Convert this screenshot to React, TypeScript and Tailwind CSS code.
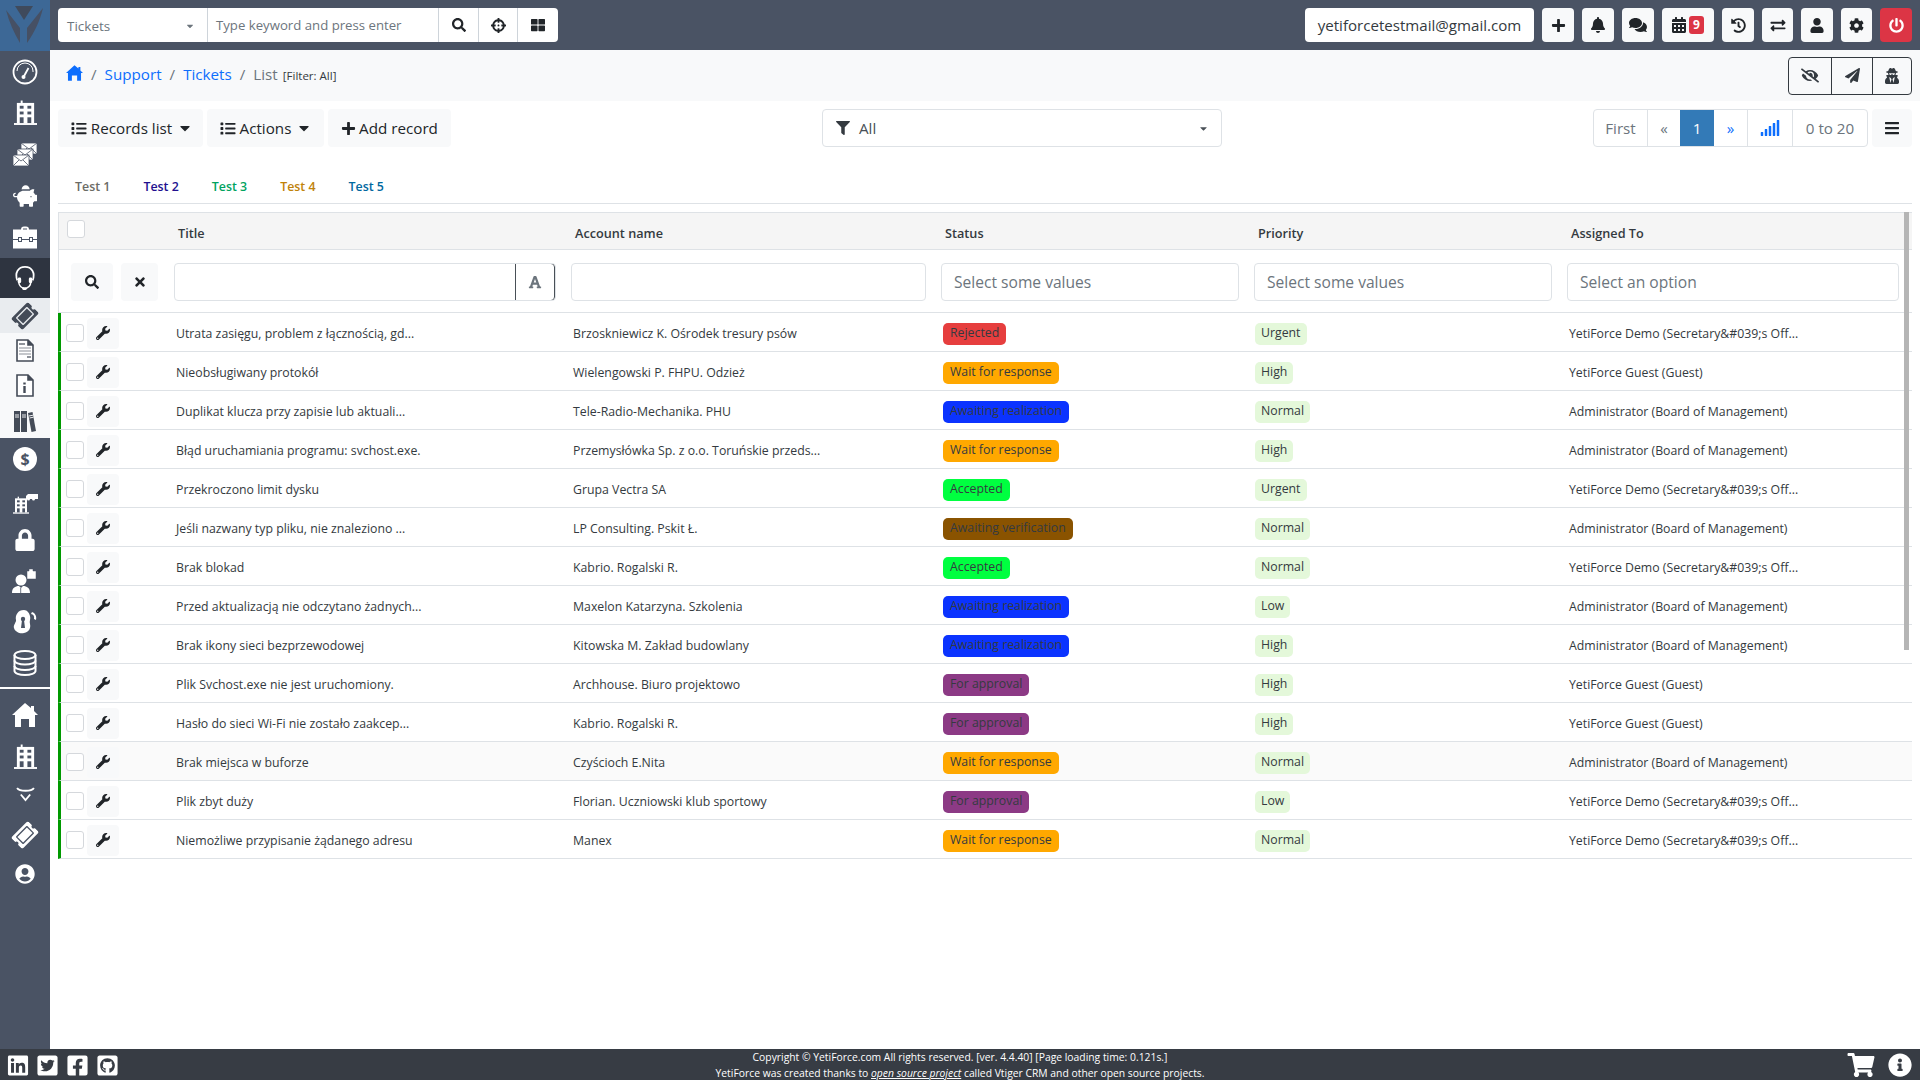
import type { ReactNode } from "react";
import {
  FaBars, FaBell, FaCalendarAlt, FaCaretDown, FaCog, FaComments, FaCrosshairs,
  FaExchangeAlt, FaEyeSlash, FaFacebookSquare, FaFilter, FaFont, FaGithubSquare,
  FaHistory, FaInfoCircle, FaLinkedin, FaList, FaLock, FaPaperPlane, FaPiggyBank, FaPlus, FaPowerOff,
  FaSearch, FaShoppingCart, FaSignal, FaTicketAlt, FaTimes, FaTwitterSquare, FaUser, FaUserCircle, FaUserSecret,
  FaWrench, FaThLarge,
} from "react-icons/fa";

const STATUS: Record<string, string> = {
  "Rejected": "bg-[#e63e3e]",
  "Wait for response": "bg-[#ffa800]",
  "Awaiting realization": "bg-[#0b33ff]",
  "Accepted": "bg-[#00ff40]",
  "Awaiting verification": "bg-[#8a5300]",
  "For approval": "bg-[#8c3a85]",
};

const DEMO = "YetiForce Demo (Secretary&#039;s Off...";
const GUEST = "YetiForce Guest (Guest)";
const ADMIN = "Administrator (Board of Management)";

const rows = [
  ["Utrata zasięgu, problem z łącznością, gd...", "Brzoskniewicz K. Ośrodek tresury psów", "Rejected", "Urgent", DEMO],
  ["Nieobsługiwany protokół", "Wielengowski P. FHPU. Odzież", "Wait for response", "High", GUEST],
  ["Duplikat klucza przy zapisie lub aktuali...", "Tele-Radio-Mechanika. PHU", "Awaiting realization", "Normal", ADMIN],
  ["Błąd uruchamiania programu: svchost.exe.", "Przemysłówka Sp. z o.o. Toruńskie przeds...", "Wait for response", "High", ADMIN],
  ["Przekroczono limit dysku", "Grupa Vectra SA", "Accepted", "Urgent", DEMO],
  ["Jeśli nazwany typ pliku, nie znaleziono ...", "LP Consulting. Pskit Ł.", "Awaiting verification", "Normal", ADMIN],
  ["Brak blokad", "Kabrio. Rogalski R.", "Accepted", "Normal", DEMO],
  ["Przed aktualizacją nie odczytano żadnych...", "Maxelon Katarzyna. Szkolenia", "Awaiting realization", "Low", ADMIN],
  ["Brak ikony sieci bezprzewodowej", "Kitowska M. Zakład budowlany", "Awaiting realization", "High", ADMIN],
  ["Plik Svchost.exe nie jest uruchomiony.", "Archhouse. Biuro projektowo", "For approval", "High", GUEST],
  ["Hasło do sieci Wi-Fi nie zostało zaakcep...", "Kabrio. Rogalski R.", "For approval", "High", GUEST],
  ["Brak miejsca w buforze", "Czyścioch E.Nita", "Wait for response", "Normal", ADMIN],
  ["Plik zbyt duży", "Florian. Uczniowski klub sportowy", "For approval", "Low", DEMO],
  ["Niemożliwe przypisanie żądanego adresu", "Manex", "Wait for response", "Normal", DEMO],
];

const BG = "#4a5364";

function Logo() {
  return (
    <svg viewBox="0 0 50 51" className="h-[51px] w-[50px]">
      <path d="M15 6h18l-9 14z" fill="#3f4a5c" />
      <path d="M6 10l14 18v15C14 33 9 22 6 10zM43 8L27 28v15c7-10 13-22 16-35z" fill="#465064" />
    </svg>
  );
}

function Gauge() {
  return (
    <svg viewBox="0 0 26 26" className="h-[26px] w-[26px]" fill="none" stroke="#fff">
      <circle cx="13" cy="13" r="11.500" strokeWidth="1.800" />
      <path d="M5 12a8 8 0 0 1 16 0v1" strokeWidth="1" />
      <path d="M11.500 18l5-9" strokeWidth="1.800" />
      <circle cx="11.500" cy="18" r="2" fill="#fff" stroke="none" />
    </svg>
  );
}

function Tower({ className }: { className: string }) {
  return (
    <svg viewBox="0 0 24 26" className={className} fill="#fff">
      <rect x="3" y="3" width="18" height="21" />
      <rect x="7" y="0.500" width="2" height="3" />
      <rect x="0" y="24" width="24" height="2" />
      <g fill={BG}>
        <rect x="6" y="6" width="4" height="3" />
        <rect x="14" y="6" width="4" height="3" />
        <rect x="6" y="12" width="4" height="3" />
        <rect x="14" y="12" width="4" height="3" />
        <rect x="6" y="18" width="4" height="6" />
        <rect x="14" y="18" width="4" height="6" />
      </g>
    </svg>
  );
}

function Mails() {
  return (
    <svg viewBox="0 0 26 26" className="h-[26px] w-[26px]" fill="#fff" stroke={BG} strokeWidth="0.800">
      <rect x="9" y="1" width="16" height="11" />
      <path d="M9 1l8 6 8-6M9 12l6-6M25 12l-6-6" fill="none" />
      <rect x="5" y="7" width="16" height="11" />
      <path d="M5 7l8 6 8-6M5 18l6-6M21 18l-6-6" fill="none" />
      <rect x="1" y="13" width="16" height="11" />
      <path d="M1 13l8 6 8-6M1 24l6-6M17 24l-6-6" fill="none" />
    </svg>
  );
}

function Case({ className }: { className: string }) {
  return (
    <svg viewBox="0 0 24 22" className={className} fill="#fff">
      <path d="M8 3a3 3 0 0 1 3-3h2a3 3 0 0 1 3 3h8v19H0V3zM10 3h4v-1h-4z" />
      <path d="M0 13h24" stroke={BG} strokeWidth="1" />
      <rect x="5.500" y="11" width="3" height="4" fill="#fff" stroke={BG} />
      <rect x="16.500" y="11" width="3" height="4" fill="#fff" stroke={BG} />
    </svg>
  );
}

function Headset() {
  return (
    <svg viewBox="0 0 22 26" className="h-[25px] w-[22px]" fill="none" stroke="#fff">
      <path d="M3 15C0 7 4 1 11 1s11 6 8 14" strokeWidth="1.800" />
      <path d="M4 16c1 4 3 7 6 7" strokeWidth="1.500" />
      <rect x="3.500" y="12" width="3.500" height="6" rx="1.500" fill="#fff" stroke="none" />
      <rect x="15" y="12" width="3.500" height="6" rx="1.500" fill="#fff" stroke="none" />
      <path d="M17 17c0 4-3 6-7 7" strokeWidth="1.500" />
      <rect x="8" y="22" width="5" height="3" rx="1.500" fill="#fff" stroke="none" />
    </svg>
  );
}

function Doc({ info }: { info?: boolean }) {
  return (
    <svg viewBox="0 0 18 23" className="h-[23px] w-[18px]" fill="#fff" stroke="#444b57" strokeWidth="1.600">
      <path d="M1 1h11l5 5v16H1z" />
      <path d="M12 1v5h5" fill="#444b57" />
      {info ? (
        <path d="M8.500 8.500v2M8.500 12v7" strokeWidth="2.400" />
      ) : (
        <g strokeWidth="1.200">
          <path d="M3 5h6" />
          <path d="M3 9h12M3 12h12M3 15h12" stroke="#8b8f97" />
          <path d="M11 18h4" />
        </g>
      )}
    </svg>
  );
}

function Books() {
  return (
    <svg viewBox="0 0 22 22" className="h-[22px] w-[22px]" fill="#444b57">
      <rect x="0" y="1" width="6" height="21" />
      <rect x="7" y="1" width="6" height="21" />
      <path d="M14 3l4.500-1 3.500 19-4.500 1z" />
      <path d="M1 5h4M1 7h4M8 5h4M8 7h4M15 6l4-.8M15.500 8l4-.8" stroke="#fff" strokeWidth="0.900" />
    </svg>
  );
}

function Dollar() {
  return (
    <span className="flex h-[24px] w-[24px] items-center justify-center rounded-full bg-white text-[16px] font-bold text-[#4a5364]">$</span>
  );
}

function TowerTruck() {
  return (
    <div className="flex h-[26px] w-[26px] items-end pl-[1px]">
      <Tower className="h-[18px] w-[16px]" />
      <svg viewBox="0 0 12 7" className="mb-[13px] ml-[-3px] h-[7px] w-[12px]" fill="#fff">
        <path d="M0 2l2-2h10v5H9a1.500 1.500 0 0 1-3 0H4a1.500 1.500 0 0 1-3 0H0z" />
      </svg>
    </div>
  );
}

function Manager() {
  return (
    <svg viewBox="0 0 26 25" className="h-[25px] w-[26px]" fill="#fff">
      <circle cx="9" cy="12" r="5.500" />
      <path d="M0 25c0-5 3-7 7-7l2 2 2-2c4 0 7 2 7 7z" />
      <path d="M15 3h2V1h4v2h3v8h-9z" stroke={BG} strokeWidth="0.500" />
      <path d="M8.700 20v5" stroke={BG} strokeWidth="0.800" />
    </svg>
  );
}

function EarLock() {
  return (
    <svg viewBox="0 0 26 26" className="h-[26px] w-[26px]" fill="#fff">
      <path d="M12 1C6 1 3 6 4 11c.5 2-3 5-2 8 1 4 6 6 10 5 5-1 7-5 6-9-1-3 1-5 0-8-.6-3-3-6-6-6z" />
      <circle cx="11" cy="10" r="2.200" fill={BG} />
      <path d="M10 11h2l1 8h-4z" fill={BG} />
      <path d="M20 3c3 1 5 4 4 8l-2-1c.6-3-.6-4.500-3-5z" />
    </svg>
  );
}

function Stack() {
  return (
    <svg viewBox="0 0 24 26" className="h-[26px] w-[24px]" fill="none" stroke="#fff" strokeWidth="2">
      <ellipse cx="12" cy="5" rx="10.500" ry="4" />
      <path d="M1.500 5v16c0 2.200 4.700 4 10.500 4s10.500-1.800 10.500-4V5" />
      <path d="M1.500 10.500c0 2.200 4.700 4 10.500 4s10.500-1.800 10.500-4M1.500 16c0 2.200 4.700 4 10.500 4s10.500-1.800 10.500-4" />
    </svg>
  );
}

function House({ className }: { className: string }) {
  return (
    <svg viewBox="0 0 26 24" className={className} fill="currentColor">
      <path d="M13 0l6 5V3h3v5l4 4h-3v12h-6v-8H9v8H3V12H0z" />
    </svg>
  );
}

function Yeti() {
  return (
    <svg viewBox="0 0 20 16" className="h-[15px] w-[19px]" fill="none" stroke="#fff" strokeWidth="2">
      <path d="M1 1c2 3 5 3 9 3s7 0 9-3M5 8l5 6 5-6" />
    </svg>
  );
}

function SideItem({ children, y, className = "" }: { children: ReactNode; y: string; className?: string }) {
  return <div className={`flex w-[50px] items-center justify-center ${y} ${className}`}>{children}</div>;
}

function Sidebar() {
  return (
    <aside className="flex w-[50px] flex-1 shrink-0 flex-col bg-[#4a5364] text-white">
      <div className="h-[1px]" />
      <SideItem y="h-[40px]"><Gauge /></SideItem>
      <SideItem y="h-[41px]"><Tower className="h-[25px] w-[23px]" /></SideItem>
      <SideItem y="h-[43px]"><Mails /></SideItem>
      <SideItem y="h-[40px]"><FaPiggyBank className="h-[24px] w-[24px]" /></SideItem>
      <SideItem y="h-[42px]"><Case className="h-[23px] w-[24px]" /></SideItem>
      <SideItem y="h-[40px] bg-[#2e3440]"><Headset /></SideItem>
      <div className="flex h-[140px] flex-col bg-[#f8f9fa] text-[#444b57]">
        <SideItem y="h-[35px] bg-[#e9ecef]"><FaTicketAlt className="h-[22px] w-[24px] -rotate-45" /></SideItem>
        <SideItem y="h-[34px]"><Doc /></SideItem>
        <SideItem y="h-[36px]"><Doc info /></SideItem>
        <SideItem y="h-[35px]"><Books /></SideItem>
      </div>
      <SideItem y="h-[42px]"><Dollar /></SideItem>
      <SideItem y="h-[41px]"><TowerTruck /></SideItem>
      <SideItem y="h-[38px]"><FaLock className="h-[22px] w-[20px]" /></SideItem>
      <SideItem y="h-[43px]"><Manager /></SideItem>
      <SideItem y="h-[39px]"><EarLock /></SideItem>
      <SideItem y="h-[43px]"><Stack /></SideItem>
      <div className="mt-[3px] h-[2px] bg-white" />
      <SideItem y="h-[52px]"><House className="h-[24px] w-[26px]" /></SideItem>
      <SideItem y="h-[30px]"><Tower className="h-[25px] w-[23px]" /></SideItem>
      <SideItem y="h-[46px]"><Yeti /></SideItem>
      <SideItem y="h-[36px]"><FaTicketAlt className="h-[22px] w-[24px] -rotate-45" /></SideItem>
      <SideItem y="h-[42px]"><FaUserCircle className="h-[20px] w-[20px]" /></SideItem>
    </aside>
  );
}

function TopIcon({ children, w = "w-[32px]", className = "bg-[#f8f9fa] text-[#212529]" }: { children: ReactNode; w?: string; className?: string }) {
  return <div className={`flex h-[34px] items-center justify-center rounded-[4px] ${w} ${className}`}>{children}</div>;
}

function TopBar() {
  return (
    <header className="flex h-[50px] shrink-0 items-center bg-[#4a5364] pl-[8px] pr-[8px]">
      <div className="flex h-[34px] w-[500px] overflow-hidden rounded-[4px] bg-white text-[13.2px] text-[#6c757d]">
        <div className="flex w-[150px] items-center justify-between border-r border-[#ced4da] pl-[9px] pr-[12px] pt-[2px] text-[13.5px]">
          <span>Tickets</span>
          <FaCaretDown className="h-[10px] w-[10px]" />
        </div>
        <div className="flex w-[230px] items-center pl-[8px] pt-[2px]">Type keyword and press enter</div>
        <div className="flex w-[40px] items-center justify-center border-l border-[#ced4da] text-[#212529]"><FaSearch className="h-[14px] w-[14px]" /></div>
        <div className="flex w-[39px] items-center justify-center border-l border-[#ced4da] text-[#212529]"><FaCrosshairs className="h-[15px] w-[15px]" /></div>
        <div className="flex flex-1 items-center justify-center border-l border-[#ced4da] text-[#212529]"><FaThLarge className="h-[14px] w-[14px]" /></div>
      </div>
      <div className="ml-auto flex items-center gap-[8px]">
        <div className="flex h-[34px] w-[229px] items-center justify-center rounded-[4px] bg-white text-[15.1px] text-[#343a40]">yetiforcetestmail@gmail.com</div>
        <TopIcon><FaPlus className="h-[15px] w-[15px]" /></TopIcon>
        <TopIcon><FaBell className="h-[16px] w-[14px]" /></TopIcon>
        <TopIcon><FaComments className="h-[16px] w-[18px]" /></TopIcon>
        <TopIcon w="w-[52px] gap-[3px]">
          <FaCalendarAlt className="h-[16px] w-[14px]" />
          <span className="flex h-[18px] w-[15px] items-center justify-center rounded-[3px] bg-[#dc3545] text-[12px] font-bold text-white">9</span>
        </TopIcon>
        <TopIcon><FaHistory className="h-[15px] w-[15px]" /></TopIcon>
        <TopIcon w="w-[31px]"><FaExchangeAlt className="h-[15px] w-[16px]" /></TopIcon>
        <TopIcon><FaUser className="h-[15px] w-[14px]" /></TopIcon>
        <TopIcon w="w-[31px]"><FaCog className="h-[15px] w-[15px]" /></TopIcon>
        <TopIcon className="bg-[#dc3545] text-white"><FaPowerOff className="h-[15px] w-[15px]" /></TopIcon>
      </div>
    </header>
  );
}

function Crumbs() {
  return (
    <div className="flex h-[51px] items-center bg-[#f8f9fa] pl-[16px] pr-[8px]">
      <div className="flex items-center pb-[3px] text-[15.2px]">
        <House className="mb-[2px] h-[16px] w-[17px] text-[#0d6efd]" />
        <span className="mx-[8px] text-[#6c757d]">/</span>
        <span className="text-[#0d6efd]">Support</span>
        <span className="mx-[8px] text-[#6c757d]">/</span>
        <span className="text-[#0d6efd]">Tickets</span>
        <span className="mx-[8px] text-[#6c757d]">/</span>
        <span className="text-[#6c757d]">List</span>
        <span className="ml-[5px] mt-[4px] text-[11.5px] text-[#343a40]">[Filter: All]</span>
      </div>
      <div className="ml-auto flex h-[38px] w-[124px] rounded-[4px] border border-[#343a40] text-[#343a40]">
        <div className="flex w-[43px] items-center justify-center border-r border-[#343a40]"><FaEyeSlash className="h-[15px] w-[18px]" /></div>
        <div className="flex w-[41px] items-center justify-center border-r border-[#343a40]"><FaPaperPlane className="h-[15px] w-[15px]" /></div>
        <div className="flex flex-1 items-center justify-center"><FaUserSecret className="h-[16px] w-[14px]" /></div>
      </div>
    </div>
  );
}

function ToolBtn({ children, className }: { children: ReactNode; className: string }) {
  return <div className={`flex h-[38px] items-center justify-center rounded-[4px] bg-[#f8f9fa] text-[15.2px] text-[#212529] ${className}`}>{children}</div>;
}

function Toolbar() {
  return (
    <div className="mt-[8px] flex h-[38px] items-center pl-[8px] pr-[8px]">
      <div className="flex w-[393px] gap-[4px]">
        <ToolBtn className="w-[145px] gap-[4px] pl-[2px]"><FaList className="h-[15px] w-[16px]" />Records list<FaCaretDown className="ml-[2px] h-[16px] w-[14px]" /></ToolBtn>
        <ToolBtn className="w-[117px] gap-[4px]"><FaList className="h-[15px] w-[16px]" />Actions<FaCaretDown className="ml-[2px] h-[16px] w-[14px]" /></ToolBtn>
        <ToolBtn className="w-[123px] gap-[3px]"><FaPlus className="h-[15px] w-[15px]" />Add record</ToolBtn>
      </div>
      <div className="ml-[371px] flex h-[38px] w-[400px] items-center rounded-[4px] border border-[#dee2e6] pl-[13px] pr-[12px] text-[15.2px] text-[#495057]">
        <FaFilter className="mr-[9px] h-[14px] w-[14px] text-[#343a40]" />
        All
        <FaCaretDown className="ml-auto h-[11px] w-[11px]" />
      </div>
      <div className="ml-auto flex h-[38px] overflow-hidden rounded-[4px] border border-[#dee2e6] text-[15.2px] text-[#6c757d]">
        <div className="flex w-[54px] items-center justify-center border-r border-[#dee2e6]">First</div>
        <div className="flex w-[32px] items-center justify-center text-[#6c757d]">«</div>
        <div className="flex w-[34px] items-center justify-center bg-[#337ab7] text-white">1</div>
        <div className="flex w-[34px] items-center justify-center border-r border-[#dee2e6] text-[#0d6efd]">»</div>
        <div className="flex w-[45px] items-center justify-center border-r border-[#dee2e6] text-[#0d6efd]"><FaSignal className="h-[16px] w-[20px]" /></div>
        <div className="flex w-[74px] items-center justify-center">0 to 20</div>
      </div>
      <div className="ml-[4px] flex h-[38px] w-[40px] items-center justify-center rounded-[4px] bg-[#f8f9fa] text-[#212529]"><FaBars className="h-[16px] w-[16px]" /></div>
    </div>
  );
}

function Tabs() {
  const tabs = [
    ["Test 1", "text-[#6b6b66]"],
    ["Test 2", "text-[#22108f]"],
    ["Test 3", "text-[#00a35f]"],
    ["Test 4", "text-[#c0820a]"],
    ["Test 5", "text-[#00689f]"],
  ];
  return (
    <div className="mx-[8px] mt-[23px] flex h-[34px] items-start gap-[33px] border-b border-[#dee2e6] pl-[17px] pt-[8px]">
      {tabs.map(([name, color]) => (
        <span key={name} className={`text-[12.4px] font-semibold ${color}`}>{name}</span>
      ))}
    </div>
  );
}

function Box({ children, className = "" }: { children?: ReactNode; className?: string }) {
  return <div className={`flex h-[38px] items-center rounded-[4px] border border-[#dee2e6] pl-[12px] text-[15.6px] text-[#6c757d] ${className}`}>{children}</div>;
}

function Checkbox({ className = "" }: { className?: string }) {
  return <div className={`h-[18px] w-[18px] rounded-[3px] border border-[#d5d8dc] bg-white ${className}`} />;
}

function TicketsTable() {
  return (
    <div className="relative mx-[8px] mt-[8px]">
      <table className="w-full table-fixed border-separate border-spacing-0 text-[12.3px] text-[#343a40]">
        <colgroup>
          <col className="w-[113px]" />
          <col className="w-[397px]" />
          <col className="w-[370px]" />
          <col className="w-[313px]" />
          <col className="w-[313px]" />
          <col />
        </colgroup>
        <thead>
          <tr className="h-[38px] bg-[#f5f5f5] text-left text-[12.7px]">
            <th className="border-y border-l border-[#dee2e6] pb-[5px] pl-[8px]"><Checkbox className="h-[17px] w-[17px]" /></th>
            <th className="border-y border-[#dee2e6] pl-[7px] pt-[5px] font-semibold">Title</th>
            <th className="border-y border-[#dee2e6] pl-[7px] pt-[5px] font-semibold">Account name</th>
            <th className="border-y border-[#dee2e6] pl-[7px] pt-[5px] font-semibold">Status</th>
            <th className="border-y border-[#dee2e6] pl-[7px] pt-[5px] font-semibold">Priority</th>
            <th className="border-y border-[#dee2e6] pl-[7px] pt-[5px] font-semibold">Assigned To</th>
          </tr>
          <tr className="h-[63px]">
            <td className="border-b border-l border-[#dee2e6] pt-[2px]">
              <div className="flex gap-[8px] pl-[12px]">
                <div className="flex h-[38px] w-[42px] items-center justify-center rounded-[4px] bg-[#f8f9fa] text-[#212529]"><FaSearch className="h-[14px] w-[14px]" /></div>
                <div className="flex h-[38px] w-[37px] items-center justify-center rounded-[4px] bg-[#f8f9fa] text-[#212529]"><FaTimes className="h-[14px] w-[12px]" /></div>
              </div>
            </td>
            <td className="border-b border-[#dee2e6] pl-[3px] pr-[12px] pt-[2px]">
              <Box className="justify-end overflow-hidden pl-0">
                <div className="flex h-[38px] w-[40px] items-center justify-center rounded-r-[4px] border border-[#495057] text-[#6c757d]"><FaFont className="h-[14px] w-[14px]" /></div>
              </Box>
            </td>
            <td className="border-b border-[#dee2e6] pl-[3px] pr-[12px] pt-[2px]"><Box /></td>
            <td className="border-b border-[#dee2e6] pl-[3px] pr-[12px] pt-[2px]"><Box className="pt-[2px]">Select some values</Box></td>
            <td className="border-b border-[#dee2e6] pl-[3px] pr-[12px] pt-[2px]"><Box className="pt-[2px]">Select some values</Box></td>
            <td className="border-b border-[#dee2e6] pl-[3px] pr-[13px] pt-[2px]"><Box className="pt-[2px]">Select an option</Box></td>
          </tr>
        </thead>
        <tbody>
          {rows.map(([title, account, status, priority, owner], i) => (
            <tr key={title} className={`h-[39px] ${i === 11 ? "bg-[#fafafa]" : ""}`}>
              <td className="border-b border-l-[3px] border-b-[#dee2e6] border-l-[#009900] pt-[2px]">
                <div className="flex items-center gap-[3px] pl-[5px]">
                  <Checkbox className="h-[16px] w-[16px]" />
                  <div className="flex h-[31px] w-[32px] items-center justify-center rounded-[4px] bg-[#f8f9fa] text-[#212529]"><FaWrench className="h-[14px] w-[14px]" /></div>
                </div>
              </td>
              <td className="border-b border-[#dee2e6] pl-[5px] pt-[4px]">{title}</td>
              <td className="border-b border-[#dee2e6] pl-[5px] pt-[4px]">{account}</td>
              <td className="border-b border-[#dee2e6] pl-[5px] pt-[3px]">
                <span className={`inline-flex h-[22px] items-center rounded-[5px] px-[7px] ${STATUS[status]}`}>{status}</span>
              </td>
              <td className="border-b border-[#dee2e6] pl-[4px] pt-[3px]">
                <span className="inline-flex h-[22px] items-center rounded-[5px] bg-[#e4f8da] px-[6px]">{priority}</span>
              </td>
              <td className="border-b border-[#dee2e6] pl-[5px] pt-[4px]">{owner}</td>
            </tr>
          ))}
        </tbody>
      </table>
      <div className="absolute right-[3px] top-0 h-[438px] w-[5px] bg-[#b5b5b5]" />
    </div>
  );
}

function Footer() {
  return (
    <footer className="relative flex h-[31px] shrink-0 flex-col items-center justify-center bg-[#373c44] text-[10.35px] leading-[16px] text-white">
      <div className="absolute left-[7px] top-[5px] flex gap-[7px] text-white">
        <FaLinkedin className="h-[23px] w-[22px]" />
        <FaTwitterSquare className="h-[23px] w-[23px]" />
        <FaFacebookSquare className="h-[23px] w-[23px]" />
        <FaGithubSquare className="h-[23px] w-[23px]" />
      </div>
      <div>Copyright © YetiForce.com All rights reserved. [ver. 4.4.40] [Page loading time: 0.121s.]</div>
      <div>YetiForce was created thanks to <span className="italic underline">open source project</span> called Vtiger CRM and other open source projects.</div>
      <div className="absolute right-[8px] top-[4px] flex items-center gap-[13px]">
        <FaShoppingCart className="h-[24px] w-[28px]" />
        <FaInfoCircle className="h-[24px] w-[24px]" />
      </div>
    </footer>
  );
}

export default function App() {
  return (
    <div className="flex h-[1080px] w-[1920px] flex-col overflow-hidden bg-white font-['Open_Sans',sans-serif]">
      <div className="flex min-h-0 flex-1">
        <div className="flex flex-col">
          <div className="flex h-[51px] w-[50px] items-center justify-center bg-[#3d6896]"><Logo /></div>
          <Sidebar />
        </div>
        <div className="flex min-w-0 flex-1 flex-col">
          <TopBar />
          <Crumbs />
          <Toolbar />
          <Tabs />
          <TicketsTable />
        </div>
      </div>
      <Footer />
    </div>
  );
}
